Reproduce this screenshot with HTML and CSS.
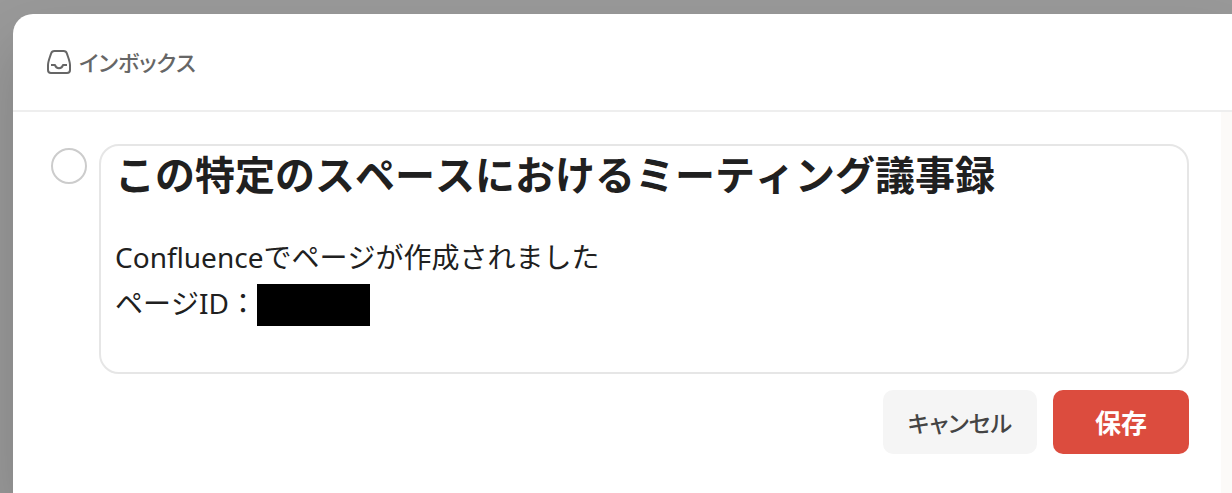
FILE: index.html
```html
<!DOCTYPE html>
<html lang="ja">
<head>
<meta charset="utf-8">
<title>インボックス</title>
<link rel="stylesheet" href="styles.css">
</head>
<body>
<main class="dialog">
  <header class="dialog-header">
    <svg class="inbox-icon" viewBox="0 0 26 26" fill="none" stroke="currentColor" stroke-width="2" stroke-linejoin="round" aria-hidden="true">
      <path d="M8.500 2h9a3.500 3.500 0 0 1 3.400 2.500C22 8 24 12.500 24 16v5a3 3 0 0 1-3 3H5a3 3 0 0 1-3-3v-5c0-3.500 2-8 3.100-11.500A3.500 3.500 0 0 1 8.500 2z"/>
      <path d="M5 16h4c.6 2.200 2 3.200 4 3.200s3.400-1 4-3.200h4"/>
    </svg>
    <span class="project-name">インボックス</span>
  </header>
  <div class="dialog-body">
    <form class="task">
      <input class="task-check" type="checkbox" aria-label="タスクを完了">
      <div class="task-main">
        <section class="editor">
          <h1 class="task-title">この特定のスペースにおけるミーティング議事録</h1>
          <p class="description">Confluenceでページが作成されました<br>ページID：<span class="redacted"></span></p>
        </section>
        <div class="actions">
          <button class="button button-secondary" type="button">キャンセル</button>
          <button class="button button-primary" type="submit">保存</button>
        </div>
      </div>
    </form>
    <aside class="sidebar"></aside>
  </div>
</main>
</body>
</html>
```
FILE: styles.css
```css
* { box-sizing: border-box; }
body {
  margin: 0;
  min-height: 100vh;
  display: flex;
  padding: 14px 0 0 13px;
  background: #999;
  color: #202020;
  font-family: "Noto Sans", "Noto Sans CJK JP", sans-serif;
  font-kerning: none;
}
.dialog {
  flex: 1;
  display: flex;
  flex-direction: column;
  background: #fff;
  border-top-left-radius: 20px;
  box-shadow: 0 30px 60px rgba(0, 0, 0, 0.16);
}
.dialog-header {
  height: 98px;
  display: flex;
  align-items: center;
  gap: 7px;
  padding: 0 33px;
  border-bottom: 2px solid #eee;
  color: #666;
  font-size: 22px;
  font-weight: 500;
  font-feature-settings: "palt";
}
.inbox-icon { width: 26px; height: 26px; }
.project-name { line-height: 32px; }
.dialog-body { flex: 1; display: flex; }
.task {
  flex: 1;
  display: flex;
  gap: 12px;
  padding: 32px 32px 0 38px;
}
.task-check {
  appearance: none;
  flex: none;
  width: 36px;
  height: 36px;
  margin: 4px 0 0;
  border: 2px solid #ccc;
  border-radius: 50%;
}
.task-main { flex: 1; }
.editor {
  padding: 2px 14px 46px;
  border: 2px solid #e6e6e6;
  border-radius: 20px;
}
.task-title {
  margin: 0;
  font-size: 40px;
  font-weight: 700;
  line-height: 54px;
}
.description {
  margin: 32px 0 0;
  font-size: 28px;
  line-height: 46px;
}
.redacted {
  display: inline-block;
  width: 113px;
  height: 42px;
  background: #000;
  vertical-align: -12px;
}
.actions {
  display: flex;
  justify-content: flex-end;
  gap: 16px;
  margin-top: 16px;
}
.button {
  height: 64px;
  padding: 0 24px;
  border: 0;
  border-radius: 10px;
  font: 700 26px "Noto Sans", "Noto Sans CJK JP", sans-serif;
}
.button-secondary {
  min-width: 154px;
  background: #f5f5f5;
  color: #444;
  font-size: 23px;
  font-weight: 500;
  font-feature-settings: "palt";
}
.button-primary {
  min-width: 136px;
  background: #dc4c3e;
  color: #fff;
}
.sidebar { width: 11px; background: #fcfaf8; }
```
